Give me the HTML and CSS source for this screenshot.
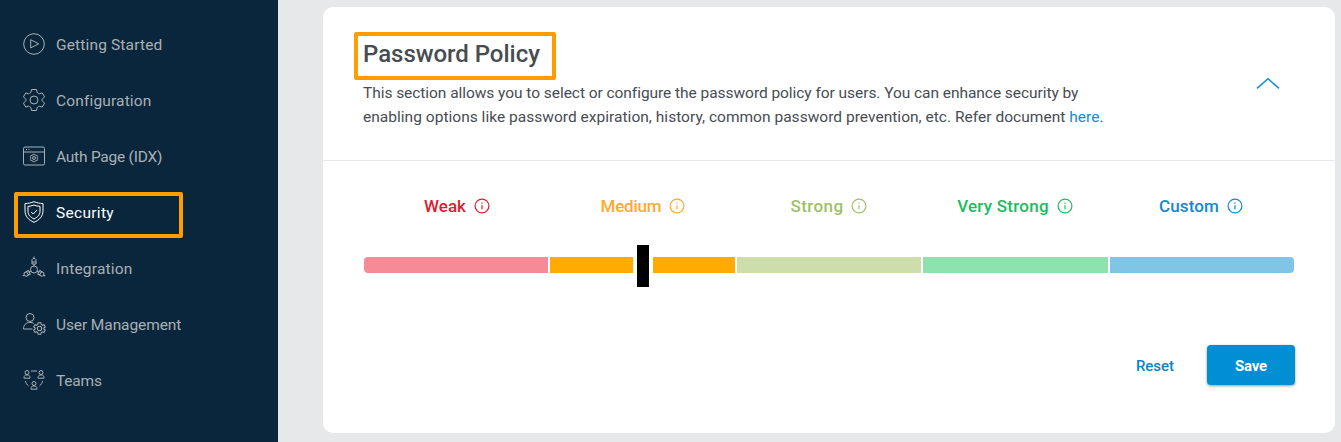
FILE: index.html
```html
<!DOCTYPE html>
<html lang="en">
<head>
<meta charset="utf-8">
<title>Password Policy</title>
<link rel="stylesheet" href="styles.css">
</head>
<body>
<svg class="defs" width="0" height="0">
  <defs>
    <symbol id="gear" viewBox="0 0 24 24"><path d="M9.500 1.500h5l.6 2.600q.2.700.9 1l.7.4q.6.400 1.300.2l2.200-.8 2.400 4-2 1.700q-.6.500-.6 1.400t.6 1.400l2 1.700-2.400 4-2.200-.8q-.7-.2-1.300.2l-.7.400q-.7.300-.9 1l-.6 2.600h-5l-.6-2.600q-.2-.7-.9-1l-.7-.4q-.6-.4-1.300-.2l-2.200.8-2.400-4 2-1.700q.6-.5.6-1.400t-.6-1.400l-2-1.700 2.400-4 2.200.8q.7.200 1.300-.2l.7-.4q.7-.3.900-1z"/><circle cx="12" cy="12" r="4"/></symbol>
    <symbol id="info" viewBox="0 0 16 16"><circle cx="8" cy="8" r="6.900"/><path d="M8 7.300v3.900M8 4.600v1.200"/></symbol>
  </defs>
</svg>
<div class="app">
  <nav class="sidebar">
    <a class="item"><svg class="icon" viewBox="0 0 24 24"><circle cx="12" cy="12" r="10.300"/><path d="M8.700 7.700v8.200l8-4.100z"/></svg><span class="t-start">Getting Started</span></a>
    <a class="item"><svg class="icon"><use href="#gear"/></svg><span class="t-config">Configuration</span></a>
    <a class="item"><svg class="icon" viewBox="0 0 24 24"><rect x="1.500" y="3" width="21" height="18" rx="1.500"/><path d="M1.500 8h21M4 5.500h1M6.500 5.500h1"/><use href="#gear" x="7.500" y="9.500" width="9" height="9" stroke-width="2.600"/></svg><span class="t-auth">Auth Page (IDX)</span></a>
    <a class="item active"><svg class="icon" viewBox="0 0 24 24"><path d="M12 1.700c3 1.200 5.800 1.700 9 1.900v7c0 5.700-3.600 9.500-9 11.700-5.400-2.200-9-6-9-11.700v-7c3.200-.2 6-.7 9-1.900z"/><path d="M12 5c2 .9 4 1.200 6 1.400v4.800c0 3.800-2.500 6-6 7.800-3.500-1.800-6-4-6-7.800V6.400c2-.2 4-.5 6-1.400z"/><path d="M9.200 12l2 2 3.800-4"/></svg><span class="t-sec">Security</span></a>
    <a class="item"><svg class="icon" viewBox="0 0 24 24"><circle cx="12" cy="13.500" r="3.500"/><g id="plug"><path d="M12 10V8M10 8V3.500l1-1h2l1 1V8zM12 2.500V.5M10 6h4"/></g><use href="#plug" transform="rotate(120 12 13.500)"/><use href="#plug" transform="rotate(240 12 13.500)"/></svg><span class="t-int">Integration</span></a>
    <a class="item"><svg class="icon" viewBox="0 0 24 24"><circle cx="8" cy="5.500" r="4"/><path d="M10.500 17h-9c0-4 2.500-6.600 6.500-6.600 1.500 0 2.700.3 3.700 1"/><use href="#gear" x="11" y="10" width="13" height="13" stroke-width="1.900"/></svg><span class="t-user">User Management</span></a>
    <a class="item"><svg class="icon" viewBox="0 0 24 24"><g id="person"><circle cx="5" cy="4.500" r="2"/><path d="M2 10.200V9.500c0-1.500 1-2.600 3-2.600s3 1.100 3 2.600v.7z"/></g><use href="#person" x="14"/><use href="#person" x="7" y="11"/><path d="M9 3h6M3.500 13c.3 2 1.200 3.500 3 5M20.500 13c-.3 2-1.200 3.500-3 5"/></svg><span class="t-teams">Teams</span></a>
    <div class="mark mark-nav"></div>
  </nav>
  <main class="content">
    <section class="card">
      <header class="head">
        <div>
          <h1>Password Policy</h1>
          <p><span class="line-a">This section allows you to select or configure the password policy for users. You can enhance security by</span><br><span class="line-b">enabling options like password expiration, history, common password prevention, etc. Refer document <a class="link">here</a>.</span></p>
        </div>
        <svg class="chevron" viewBox="0 0 24 12"><path d="M1 11.300L12 1.700l11 9.600"/></svg>
        <div class="mark mark-title"></div>
      </header>
      <div class="labels">
        <div class="label weak"><span>Weak</span><svg><use href="#info"/></svg></div>
        <div class="label medium"><span>Medium</span><svg><use href="#info"/></svg></div>
        <div class="label strong"><span>Strong</span><svg><use href="#info"/></svg></div>
        <div class="label very"><span>Very Strong</span><svg><use href="#info"/></svg></div>
        <div class="label custom"><span>Custom</span><svg><use href="#info"/></svg></div>
      </div>
      <div class="meter">
        <div class="seg seg-weak"></div>
        <div class="seg seg-medium"><div class="thumb"></div></div>
        <div class="seg seg-strong"></div>
        <div class="seg seg-very"></div>
        <div class="seg seg-custom"></div>
      </div>
      <footer class="actions"><button class="reset">Reset</button><button class="save">Save</button></footer>
    </section>
  </main>
</div>
</body>
</html>
```
FILE: styles.css
```css
* { box-sizing: border-box; }
body { margin: 0; font-family: Roboto, "Liberation Sans", sans-serif; background: #e7e8ea; overflow: hidden; }
svg { fill: none; stroke: currentColor; }
.defs { position: absolute; }
.app { display: flex; height: 442px; }
.sidebar { position: relative; flex: 0 0 278px; padding-top: 16px; background: #0a263c; }
.item { display: flex; align-items: center; gap: 10px; height: 56px; padding-left: 22px; color: #a9b0b4; font-size: 15.500px; white-space: nowrap; }
.item span { padding-top: 2px; }
.item.active { color: #fff; }
.t-start, .t-config { letter-spacing: .15px; }
.t-auth { letter-spacing: -.23px; }
.t-sec { letter-spacing: .3px; }
.t-int { letter-spacing: .2px; }
.t-user { letter-spacing: -.1px; }
.t-teams { letter-spacing: -.2px; }
.icon { width: 24px; height: 24px; flex: none; stroke-width: 1; overflow: visible; }
.mark { position: absolute; border: 4px solid #ff9c00; border-radius: 2px; }
.mark-nav { left: 14px; top: 192px; width: 169px; height: 46px; }
.mark-title { left: 31px; top: 25px; width: 202px; height: 48px; }
.content { flex: 1; padding: 7px 6px 9px 45px; }
.card { height: 426px; background: #fff; border-radius: 10px; }
.head { position: relative; display: flex; justify-content: space-between; height: 154px; padding: 31px 55px 0 40px; border-bottom: 1px solid #e7e8ea; color: #474c52; }
h1 { margin: 0; font-size: 24px; line-height: 32px; font-weight: 500; letter-spacing: -.03px; white-space: nowrap; }
p { margin: 11px 0 0; font-size: 15.500px; line-height: 24px; white-space: nowrap; }
.line-a { letter-spacing: -.05px; }
.line-b { letter-spacing: .025px; }
.link { color: #0b8fd0; }
.chevron { width: 24px; height: 12px; margin-top: 39px; color: #1291d3; stroke-width: 1.600; }
.labels { display: grid; grid-template-columns: repeat(5, 1fr); height: 96px; padding: 33px 41px 0; }
.label { display: flex; justify-content: center; align-items: center; gap: 8px; height: 24px; font-size: 17px; font-weight: 500; white-space: nowrap; }
.label svg { width: 16px; height: 16px; margin-top: -1px; stroke-width: 1.200; }
.weak { color: #e01b2e; }
.medium { color: #ffaa2b; letter-spacing: -.2px; }
.strong { color: #9fc068; letter-spacing: .4px; }
.very { color: #22bb5b; letter-spacing: .25px; }
.custom { color: #1488ca; letter-spacing: .15px; }
.meter { display: grid; grid-template-columns: repeat(5, 1fr); gap: 2px; height: 16px; margin: 0 41px; }
.seg { position: relative; }
.seg-weak { background: #f58b94; border-radius: 4px 0 0 4px; }
.seg-medium { background: #ffab00; }
.seg-strong { background: #cddeab; }
.seg-very { background: #8ee2ad; }
.seg-custom { background: #80c5e6; border-radius: 0 4px 4px 0; }
.thumb { position: absolute; left: 83px; top: -12px; width: 20px; height: 42px; background: #000; border: solid #fff; border-width: 0 4px; }
.actions { display: flex; justify-content: flex-end; gap: 12px; padding: 72px 40px 0 0; }
button { height: 40px; padding: 1px 0 0; border: 0; border-radius: 4px; font-family: inherit; font-size: 15px; }
.reset { width: 80px; color: #0b83c7; background: none; font-weight: 500; }
.save { width: 88px; color: #fff; background: #008fd2; font-weight: 700; letter-spacing: -.2px; box-shadow: 0 1px 3px rgba(0, 0, 0, .4); }
```
